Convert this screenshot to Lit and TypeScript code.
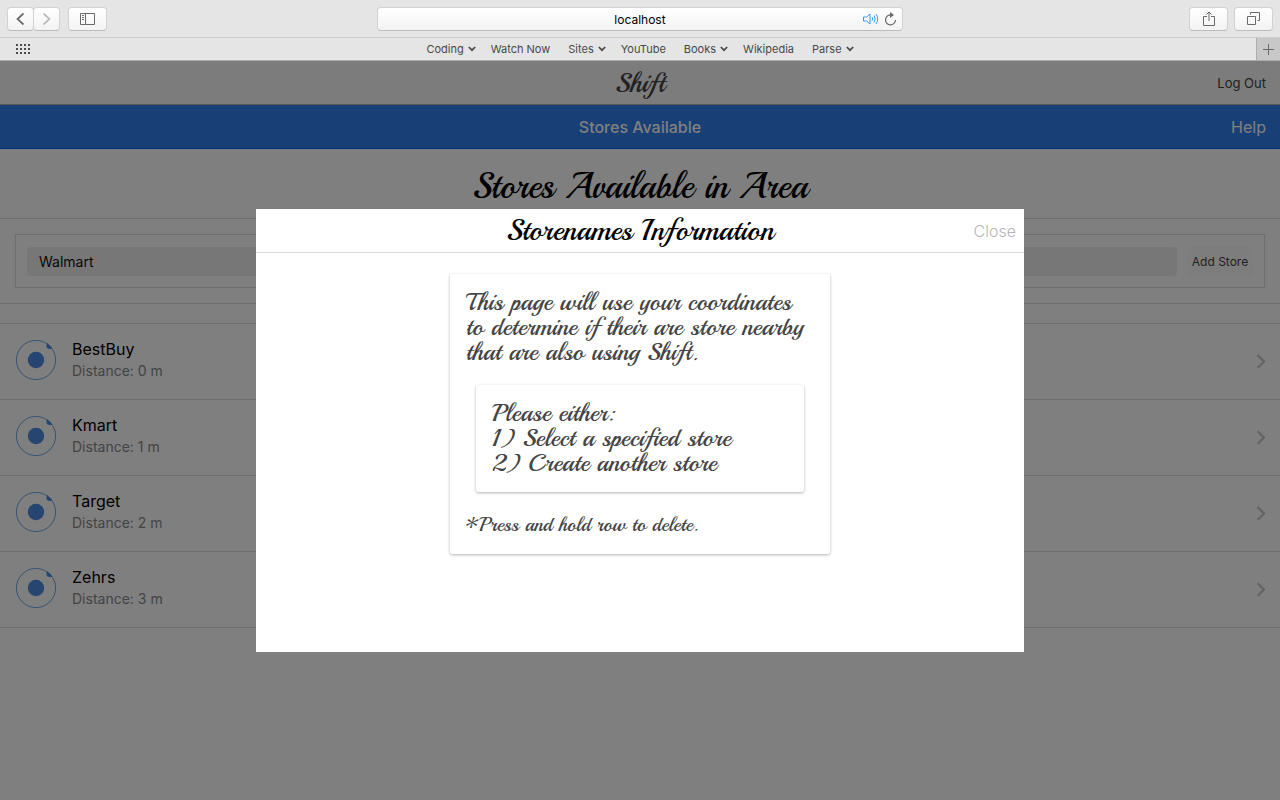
import { LitElement, html, svg, css, nothing } from "lit";
import { customElement, property, state } from "lit/decorators.js";

interface Bookmark { label: string; menu?: boolean }
interface Store { name: string; distance: number }

const caret = svg`<path d="M.8 1 4 4.200 7.200 1" fill="none" stroke="currentColor" stroke-width="1.700"/>`;

@customElement("browser-bar")
export class BrowserBar extends LitElement {
  @property({ attribute: false }) bookmarks: Bookmark[] = [];

  static styles = css`
    :host { display: block; background: #e5e5e5; color: #484848; font-family: Inter, "Liberation Sans", sans-serif; }
    * { box-sizing: border-box; }
    .toolbar { display: grid; grid-template-columns: 1fr 41.5% 1fr; align-items: center; height: 38px; padding: 0 7px; border-bottom: 1px solid #cdcdcd; }
    .group { display: flex; gap: 8px; }
    .end { justify-content: flex-end; }
    .pair { display: flex; }
    button { display: flex; align-items: center; justify-content: center; padding: 0; border: 1px solid #d2d2d2; border-bottom-color: #bcbcbc; border-radius: 4px; background: linear-gradient(#fff, #f3f3f3); color: #6a6a6a; width: 39px; height: 24px; font: inherit; }
    .pair button { width: 27px; }
    .pair button + button { margin-left: -1px; color: #bdbdbd; }
    .end { gap: 6px; }
    .address { position: relative; display: flex; }
    input { width: 100%; height: 24px; padding: 1px 42px 0; border: 1px solid #d2d2d2; border-bottom-color: #bcbcbc; border-radius: 4px; background: linear-gradient(#fff, #f3f3f3); text-align: center; color: #000; font: 12px Inter, "Liberation Sans", sans-serif; }
    .tools { position: absolute; right: 4px; top: 4px; display: flex; gap: 4px; }
    .tools button { width: 16px; height: 16px; border: 0; background: none; }
    .tools .sound { color: #3b98ee; }
    .favorites { display: grid; grid-template-columns: 1fr auto 1fr; align-items: center; height: 23px; border-bottom: 1px solid #acacac; }
    nav { display: flex; gap: 15px; }
    a { display: flex; align-items: center; gap: 4px; color: inherit; text-decoration: none; font-size: 11px; line-height: 16px; }
    a.plain { padding-right: 3px; }
    .grid { border: 0; background: none; width: 16px; height: 16px; margin-left: 15px; color: #4c4c4c; }
    .add { justify-self: end; width: 24px; height: 22px; border: 0; border-left: 1px solid #acacac; border-radius: 0; background: #c8c8c8; }
  `;

  render() {
    return html`
      <div class="toolbar">
        <div class="group">
          <div class="pair">
            <button aria-label="Back"><svg width="9" height="14" viewBox="0 0 9 14"><path d="M7.500 1.500 1.500 7l6 5.500" fill="none" stroke="currentColor" stroke-width="1.700"/></svg></button>
            <button aria-label="Forward"><svg width="9" height="14" viewBox="0 0 9 14"><path d="m1.500 1.500 6 5.500-6 5.500" fill="none" stroke="currentColor" stroke-width="1.700"/></svg></button>
          </div>
          <button aria-label="Sidebar"><svg width="15" height="12" viewBox="0 0 15 12" fill="none" stroke="currentColor"><path d="M.5.5h14v11H.5zM5.500.5v11M2 2.500h2M2 4.500h2M2 6.500h2"/></svg></button>
        </div>
        <div class="address">
          <input aria-label="Address" .value=${"localhost"} />
          <div class="tools">
            <button class="sound" aria-label="Mute tab"><svg width="16" height="12" viewBox="0 0 16 12" fill="none" stroke="currentColor"><path d="M.5 4h3L7 1v10L3.500 8h-3zM9 4.200q1.300 1.800 0 3.600M11 2.500q2.400 3.500 0 7M13 1q3.400 5 0 10"/></svg></button>
            <button aria-label="Reload"><svg width="13" height="14" viewBox="0 0 13 14"><path d="M8 3.100A5 5 0 1 0 11.500 8" fill="none" stroke="currentColor" stroke-width="1.200"/><path d="M6 0v6l4-3z" fill="currentColor"/></svg></button>
          </div>
        </div>
        <div class="group end">
          <button aria-label="Share"><svg width="12" height="16" viewBox="0 0 12 16" fill="none" stroke="currentColor"><path d="M4 5.500H.5v9h11v-9H8M6 10V1M3.500 3.500 6 1l2.500 2.500"/></svg></button>
          <button aria-label="Show tabs"><svg width="13" height="13" viewBox="0 0 13 13" fill="none" stroke="currentColor"><path d="M.5 4.500h8v8h-8zM3.500 2.500v-2h9v8h-2"/></svg></button>
        </div>
      </div>
      <div class="favorites">
        <button class="grid" aria-label="Favorites"><svg width="14" height="10" viewBox="0 0 14 10" fill="currentColor">${[0, 4, 8, 12].map((x) => [0, 4, 8].map((y) => svg`<rect x=${x} y=${y} width="2" height="2"/>`))}</svg></button>
        <nav>${this.bookmarks.map((b) => html`<a href="#" class=${b.menu ? "menu" : "plain"}>${b.label}${b.menu ? html`<svg width="8" height="6" viewBox="0 0 8 6">${caret}</svg>` : nothing}</a>`)}</nav>
        <button class="add" aria-label="New tab"><svg width="11" height="11" viewBox="0 0 11 11"><path d="M5.500 0v11M0 5.500h11" stroke="currentColor"/></svg></button>
      </div>
    `;
  }
}

@customElement("info-modal")
export class InfoModal extends LitElement {
  static styles = css`
    :host { position: absolute; inset: 0; display: block; background: rgba(0, 0, 0, 0.5); font-family: Inter, "Liberation Sans", sans-serif; }
    * { box-sizing: border-box; }
    .modal { position: absolute; top: 20%; left: 20%; width: 60%; height: 60%; background: #fff; overflow: auto; }
    header { display: grid; grid-template-columns: 1fr auto 1fr; align-items: center; height: 44px; padding: 0 8px; border-bottom: 1px solid #d9d9d9; }
    h2, p { margin: 0; font-family: Playball, "Liberation Serif", serif; font-weight: 400; }
    h2 { grid-column: 2; font-size: 30px; line-height: 43px; font-weight: 500; color: #000; }
    button { justify-self: end; padding: 1px 0 0; border: 0; background: none; color: #b6b6b6; font: 300 16px/42px Inter, "Liberation Sans", sans-serif; }
    .card { border-radius: 2px; background: #fff; box-shadow: 0 1px 3px rgba(0, 0, 0, 0.3); padding: 16px; color: #444; }
    .outer { width: 380px; max-width: 100%; margin: 21px auto; }
    .inner { margin: 20px 10px; }
    p { font-size: 25px; line-height: 25px; }
    p.note { font-size: 20px; line-height: 26px; }
  `;

  render() {
    return html`
      <section class="modal" role="dialog" aria-labelledby="title">
        <header>
          <h2 id="title">Storenames Information</h2>
          <button @click=${() => this.dispatchEvent(new CustomEvent("close"))}>Close</button>
        </header>
        <div class="card outer">
          <p>This page will use your coordinates<br />to determine if their are store nearby<br />that are also using Shift.</p>
          <div class="card inner"><p>Please either:<br />1) Select a specified store<br />2) Create another store</p></div>
          <p class="note">*Press and hold row to delete.</p>
        </div>
      </section>
    `;
  }
}

@customElement("app-root")
export class AppRoot extends LitElement {
  @state() private open = true;
  @state() private stores: Store[] = ["BestBuy", "Kmart", "Target", "Zehrs"].map((name, distance) => ({ name, distance }));

  private bookmarks: Bookmark[] = [
    { label: "Coding", menu: true }, { label: "Watch Now" }, { label: "Sites", menu: true }, { label: "YouTube" },
    { label: "Books", menu: true }, { label: "Wikipedia" }, { label: "Parse", menu: true },
  ];

  static styles = css`
    :host { display: flex; flex-direction: column; min-height: 100vh; font-family: Inter, "Liberation Sans", sans-serif; }
    * { box-sizing: border-box; }
    .app { position: relative; flex: 1; background: #fff; }
    .bar { display: grid; grid-template-columns: 1fr auto 1fr; align-items: center; height: 44px; padding: 0 14px; border-bottom: 1px solid #b2b2b2; background: #f8f8f8; }
    .bar.sub { background: #307eec; border-color: #0c60ee; color: #fff; }
    .brand, h1 { margin: 0; font-family: Playball, "Liberation Serif", serif; font-weight: 500; }
    .brand { grid-column: 2; font-size: 28px; line-height: 36px; color: #444; }
    .title { grid-column: 2; margin: 0; font-size: 16px; line-height: 24px; font-weight: 500; }
    .bar button { justify-self: end; padding: 0; border: 0; background: none; font: 13px/24px Inter, "Liberation Sans", sans-serif; color: #444; }
    .bar.sub button { font-size: 16px; color: #fff; }
    h1 { padding: 12px 16px 5px; border-bottom: 1px solid #dedede; text-align: center; font-size: 36px; line-height: 52px; }
    .entry { padding: 15px; border-bottom: 1px solid #dedede; }
    form { display: flex; align-items: center; gap: 10px; padding: 11px 11px 10px; border: 1px solid #dedede; }
    input { flex: 1; min-width: 0; height: 29px; padding: 0 12px; border: 0; border-radius: 4px; background: #efefef; font: 14px Inter, "Liberation Sans", sans-serif; color: #111; }
    form button { height: 31px; width: 66px; padding: 0; border: 0; border-radius: 4px; background: #fbfbfb; color: #444; font: 12px Inter, "Liberation Sans", sans-serif; white-space: nowrap; }
    ul { list-style: none; margin: 19px 0 0; padding: 0; border-top: 1px solid #dedede; }
    li { border-bottom: 1px solid #dedede; }
    .row { display: flex; align-items: center; gap: 16px; height: 75px; padding: 0 14px 0 16px; color: #000; text-decoration: none; }
    .text { flex: 1; display: flex; flex-direction: column; gap: 2px; }
    .orbit, .text { margin-bottom: 4px; }
    .name { font-size: 16px; line-height: 20px; }
    .distance { font-size: 14px; line-height: 20px; color: #888; }
    .orbit { color: #4c8ae0; }
    .chevron { color: #c8c8c8; }
  `;

  private orbit() {
    return html`<svg class="orbit" width="40" height="40" viewBox="0 0 40 40" aria-hidden="true">
      <clipPath id="disc"><circle cx="20" cy="20" r="20"/></clipPath>
      <circle cx="20" cy="20" r="19.600" fill="none" stroke="currentColor" stroke-width=".8"/>
      <circle cx="20" cy="20" r="8.200" fill="currentColor"/>
      <circle cx="34" cy="5.500" r="3.600" fill="currentColor" clip-path="url(#disc)"/>
    </svg>`;
  }

  render() {
    return html`
      <browser-bar .bookmarks=${this.bookmarks}></browser-bar>
      <main class="app">
        <header class="bar"><div class="brand">Shift</div><button>Log Out</button></header>
        <div class="bar sub"><h2 class="title">Stores Available</h2><button @click=${() => (this.open = true)}>Help</button></div>
        <h1>Stores Available in Area</h1>
        <div class="entry">
          <form @submit=${(e: Event) => e.preventDefault()}>
            <input aria-label="Store name" .value=${"Walmart"} />
            <button>Add Store</button>
          </form>
        </div>
        <ul>${this.stores.map((s) => html`<li><a class="row" href="#">
          ${this.orbit()}
          <span class="text"><span class="name">${s.name}</span><span class="distance">Distance: ${s.distance} m</span></span>
          <svg class="chevron" width="10" height="15" viewBox="0 0 10 15"><path d="m1.500 1 6.500 6.500L1.500 14" fill="none" stroke="currentColor" stroke-width="2.200"/></svg>
        </a></li>`)}</ul>
        ${this.open ? html`<info-modal @close=${() => (this.open = false)}></info-modal>` : nothing}
      </main>
    `;
  }
}
